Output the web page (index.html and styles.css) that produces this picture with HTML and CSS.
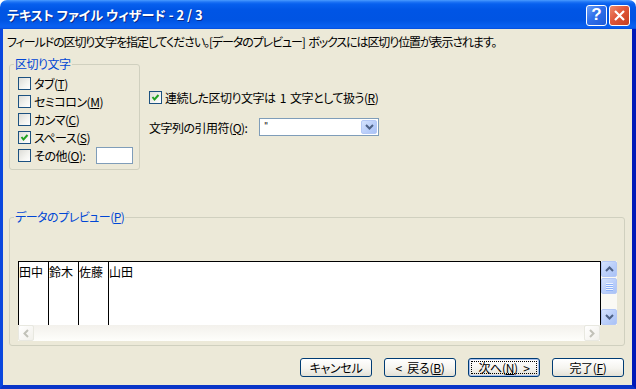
FILE: index.html
```html
<!DOCTYPE html>
<html lang="ja">
<head>
	<title>テキスト ファイル ウィザード - 2 / 3</title>
	<meta charset="UTF-8">
	<meta name="viewport" content="width=device-width, initial-scale=1.0">
	<link rel="stylesheet" href="styles.css">
</head>
<body>
<div class="window">
	<div class="titlebar">
		<span class="title">テキスト ファイル ウィザード - 2 / 3</span>
		<div class="title-buttons">
			<button class="tb-btn help">?</button>
			<button class="tb-btn close">
				<svg width="13" height="13" viewBox="0 0 13 13"><path d="M2 2 L11 11 M11 2 L2 11" stroke="#fff" stroke-width="2.2" fill="none"/></svg>
			</button>
		</div>
	</div>

	<div class="frame">
		<p class="intro">フィールドの区切り文字を指定してください。[データのプレビュー] ボックスには区切り位置が表示されます。</p>

		<div class="options">
			<fieldset class="group delims">
				<legend>区切り文字</legend>
				<label class="check"><span class="box"></span>タブ(<u>T</u>)</label>
				<label class="check"><span class="box"></span>セミコロン(<u>M</u>)</label>
				<label class="check"><span class="box"></span>カンマ(<u>C</u>)</label>
				<label class="check"><span class="box checked"><svg width="11" height="11" viewBox="0 0 11 11"><path d="M2.5 5 L4.5 7.5 L8.5 3" stroke="#21A121" stroke-width="2" fill="none"/></svg></span>スペース(<u>S</u>)</label>
				<div class="check other">
					<label class="check"><span class="box"></span>その他(<u>O</u>):</label>
					<span class="textbox"></span>
				</div>
			</fieldset>

			<div class="side">
				<label class="check"><span class="box checked"><svg width="11" height="11" viewBox="0 0 11 11"><path d="M2.5 5 L4.5 7.5 L8.5 3" stroke="#21A121" stroke-width="2" fill="none"/></svg></span>連続した区切り文字は 1 文字として扱う(<u>R</u>)</label>
				<div class="quote-row">
					<span>文字列の引用符(<u>Q</u>):</span>
					<div class="combo">
						<span class="combo-text">"</span>
						<span class="combo-btn">
							<svg width="9" height="6" viewBox="0 0 9 6"><path d="M1 1 L4.5 4.5 L8 1" stroke="#4D6185" stroke-width="2" fill="none"/></svg>
						</span>
					</div>
				</div>
			</div>
		</div>

		<fieldset class="group preview">
			<legend>データのプレビュー(<u>P</u>)</legend>
			<div class="preview-box">
				<div class="preview-main">
					<div class="grid">
						<div class="col">田中</div>
						<div class="col">鈴木</div>
						<div class="col">佐藤</div>
						<div class="col last">山田</div>
					</div>
					<div class="hscroll">
						<span class="h-btn"><svg width="6" height="9" viewBox="0 0 6 9"><path d="M5 1 L1.5 4.5 L5 8" stroke="#C1C1B8" stroke-width="2" fill="none"/></svg></span>
						<span class="h-btn"><svg width="6" height="9" viewBox="0 0 6 9"><path d="M1 1 L4.5 4.5 L1 8" stroke="#C1C1B8" stroke-width="2" fill="none"/></svg></span>
					</div>
				</div>
				<div class="vscroll">
					<span class="v-btn"><svg width="9" height="6" viewBox="0 0 9 6"><path d="M1 5 L4.5 1.5 L8 5" stroke="#4D6185" stroke-width="2" fill="none"/></svg></span>
					<span class="v-thumb"><i></i><i></i><i></i><i></i></span>
					<span class="v-track"></span>
					<span class="v-btn"><svg width="9" height="6" viewBox="0 0 9 6"><path d="M1 1 L4.5 4.5 L8 1" stroke="#4D6185" stroke-width="2" fill="none"/></svg></span>
				</div>
			</div>
		</fieldset>

		<div class="buttons">
			<button class="btn">キャンセル</button>
			<button class="btn">&lt; 戻る(<u>B</u>)</button>
			<button class="btn default">次へ(<u>N</u>) &gt;</button>
			<button class="btn">完了(<u>F</u>)</button>
		</div>
	</div>
</div>
</body>
</html>
```

FILE: styles.css
```css
	body {
		margin: 0;
		background-color: #ffffff;
		font-family: "Noto Sans CJK JP", "Noto Sans", sans-serif;
		font-size: 12px;
		font-feature-settings: "palt";
		letter-spacing: -0.5px;
		color: #000000;
	}

	.window {
		width: 636px;
		height: 389px;
		display: flex;
		flex-direction: column;
	}

	/* Title bar */
	.titlebar {
		height: 29px;
		flex: none;
		display: flex;
		align-items: center;
		justify-content: space-between;
		padding: 0 6px 0 7px;
		border-radius: 7px 7px 0 0;
		background: linear-gradient(to bottom, #4A9BFF 0, #1E74F5 2px, #0760EE 4px, #0055E5 10px, #0054E3 20px, #0860F0 26px, #0B5CEC 28px, #0048D6 29px);
	}

	.title {
		color: #ffffff;
		font-size: 13px;
		font-weight: bold;
		text-shadow: 1px 1px #0A2A8A;
		letter-spacing: 0;
	}

	.title-buttons {
		display: flex;
		gap: 2px;
		padding-top: 1px;
	}

	.tb-btn {
		width: 21px;
		height: 21px;
		border: 1px solid #ffffff;
		border-radius: 3px;
		padding: 0;
		display: flex;
		align-items: center;
		justify-content: center;
		color: #ffffff;
		font-family: "Liberation Sans", sans-serif;
		font-weight: bold;
		font-size: 17px;
	}

	.help {
		background: linear-gradient(135deg, #6A9DF6 0%, #2F6FEA 45%, #1E5BD8 100%);
	}

	.close {
		background: linear-gradient(135deg, #EE8A6C 0%, #E0573A 45%, #C63F1F 100%);
	}

	/* Window body */
	.frame {
		flex: 1;
		background-color: #ECE9D8;
		border-left: 3px solid #0A47DE;
		border-right: 4px solid #0019B8;
		border-bottom: 4px solid #0A35C8;
		padding: 0 7px 0 6px;
		display: flex;
		flex-direction: column;
	}

	.intro {
		margin: 6px 0 0 -2px;
		line-height: 14px;
		white-space: nowrap;
		letter-spacing: -1.1px;
		word-spacing: 2px;
	}

	.options {
		display: flex;
		margin-top: 8px;
	}

	.group {
		margin: 0;
		border: 1px solid #D0D0BF;
		border-radius: 3px;
	}

	.group legend {
		color: #0046D5;
		padding: 0 1px;
		margin-left: -4px;
		line-height: 14px;
	}

	.delims {
		width: 131px;
		box-sizing: border-box;
		padding: 3px 0 4px 8px;
	}

	.check {
		display: flex;
		align-items: center;
		height: 18px;
		white-space: nowrap;
	}

	.box {
		width: 13px;
		height: 13px;
		box-sizing: border-box;
		border: 1px solid #1C5180;
		background: linear-gradient(135deg, #DCDCD7 0%, #F4F4F0 60%, #FFFFFF 100%);
		margin-right: 3px;
		display: flex;
		align-items: center;
		justify-content: center;
		flex: none;
	}

	.other {
		height: 19px;
	}

	.other .check {
		width: 78px;
		flex: none;
	}

	.textbox {
		width: 37px;
		height: 17px;
		box-sizing: border-box;
		border: 1px solid #7F9DB9;
		background-color: #ffffff;
	}

	.side {
		margin-left: 9px;
		padding-top: 31px;
		word-spacing: 2px;
	}

	.quote-row {
		display: grid;
		grid-template-columns: 110px 120px;
		align-items: center;
		margin-top: 12px;
	}

	.combo {
		height: 18px;
		box-sizing: border-box;
		border: 1px solid #7F9DB9;
		background-color: #ffffff;
		display: flex;
		justify-content: space-between;
		padding: 1px;
	}

	.combo-text {
		padding-left: 3px;
		line-height: 12px;
		font-family: "DejaVu Sans", sans-serif;
		font-size: 9px;
		color: #000000;
	}

	.combo-btn,
	.v-btn,
	.v-thumb {
		width: 16px;
		box-sizing: border-box;
		border: 1px solid #B4C8F6;
		border-radius: 2px;
		background: linear-gradient(135deg, #D5E3FD 0%, #BCD0FA 50%, #A9C2F6 100%);
		display: flex;
		align-items: center;
		justify-content: center;
	}

	.combo-btn {
		height: 14px;
	}

	/* Preview */
	.preview {
		margin-top: 40px;
		padding: 37px 7px 4px 8px;
	}

	.preview-box {
		display: flex;
		height: 80px;
	}

	.preview-main {
		flex: 1;
		display: flex;
		flex-direction: column;
	}

	.grid {
		height: 64px;
		box-sizing: border-box;
		border: 1px solid #000000;
		border-bottom: none;
		background-color: #ffffff;
		display: flex;
	}

	.col {
		width: 29px;
		border-right: 1px solid #000000;
		line-height: 14px;
		padding-top: 3px;
		white-space: nowrap;
		letter-spacing: 0;
	}

	.col.last {
		border-right: none;
		flex: 1;
	}

	.hscroll {
		height: 16px;
		margin-right: 1px;
		display: flex;
		justify-content: space-between;
		background: linear-gradient(to bottom, #F3F1EC 0%, #FEFEFB 100%);
	}

	.h-btn {
		width: 16px;
		height: 16px;
		box-sizing: border-box;
		border: 1px solid #E8E8E0;
		border-radius: 2px;
		background: linear-gradient(135deg, #FFFFFF 0%, #F1F0EA 100%);
		display: flex;
		align-items: center;
		justify-content: center;
	}

	.vscroll {
		width: 16px;
		height: 64px;
		display: flex;
		flex-direction: column;
		background-color: #FAF9F4;
	}

	.v-btn {
		height: 16px;
	}

	.v-thumb {
		height: 16px;
		margin-top: 1px;
		flex-direction: column;
		gap: 1px;
	}

	.v-thumb i {
		width: 7px;
		height: 1px;
		background-color: #EEF4FE;
		box-shadow: 0 1px #8CB0F8;
	}

	.v-track {
		flex: 1;
	}

	/* Buttons */
	.buttons {
		display: flex;
		justify-content: flex-end;
		gap: 12px;
		margin-top: 12px;
		padding-right: 1px;
	}

	.btn {
		width: 72px;
		height: 19px;
		padding: 0;
		border: 1px solid #003C74;
		border-radius: 3px;
		background: linear-gradient(to bottom, #FFFFFF 0%, #F5F4EF 55%, #E3E1D6 100%);
		font-family: inherit;
		font-size: 12px;
		font-feature-settings: "palt";
		letter-spacing: -0.3px;
		word-spacing: 3px;
		line-height: 15px;
		color: #000000;
		position: relative;
	}

	.btn.default {
		box-shadow: inset 0 0 0 1px #A8C0F0;
	}

	.btn.default::after {
		content: "";
		position: absolute;
		top: 2px;
		left: 2px;
		right: 2px;
		bottom: 2px;
		border: 1px dotted #000000;
	}
```
